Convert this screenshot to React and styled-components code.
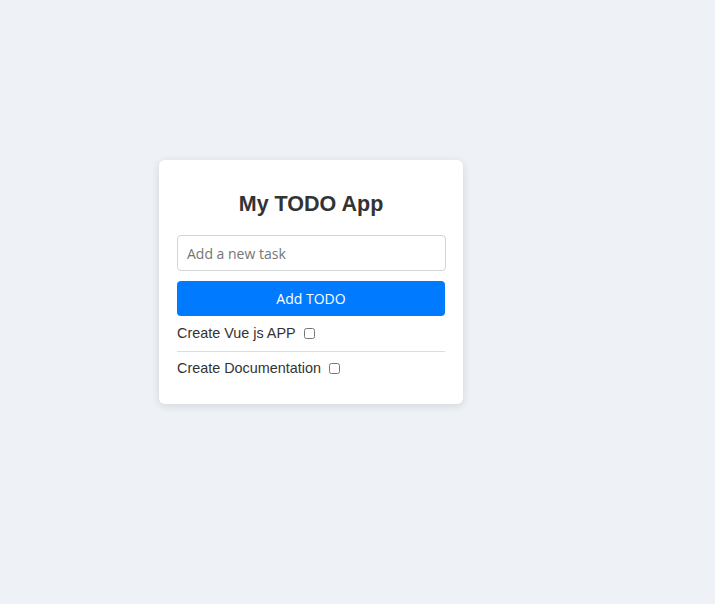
import React, { useState } from "react"
import styled, { createGlobalStyle } from "styled-components"

const Global = createGlobalStyle`
  html, body {
    margin: 0;
    padding: 0;
    background: #eef2f7;
    min-height: 100%;
  }
  body {
    font-family: "Liberation Sans", Arial, sans-serif;
    color: #333;
  }
`

const Page = styled.div`
  min-height: 604px;
  padding: 160px 0 0 159px;
  box-sizing: border-box;
`

const Card = styled.div`
  width: 304px;
  box-sizing: border-box;
  padding: 28px 18px 19px;
  background: #fff;
  border-radius: 6px;
  box-shadow: 0 2px 8px rgba(0, 0, 0, 0.12);
`

const Title = styled.h2`
  margin: 0 0 15px;
  text-align: center;
  font-size: 21.5px;
  line-height: 32px;
  font-weight: bold;
  color: #333;
`

const TaskInput = styled.input`
  display: block;
  width: 269px;
  height: 36px;
  box-sizing: border-box;
  padding: 0 9px;
  border: 1px solid #d4d4d4;
  border-radius: 4px;
  font-family: "Open Sans", "Noto Sans", sans-serif;
  font-size: 14px;
  color: #333;
  outline: none;
  &::placeholder {
    color: #757575;
  }
`

const AddButton = styled.button`
  display: block;
  width: 268px;
  height: 35px;
  margin-top: 10px;
  border: none;
  border-radius: 4px;
  background: #007bff;
  color: #fff;
  font-family: "Open Sans", "Noto Sans", sans-serif;
  font-size: 14px;
  cursor: pointer;
`

const List = styled.ul`
  list-style: none;
  margin: 0;
  padding: 0;
  width: 268px;
`

const Item = styled.li`
  display: flex;
  align-items: center;
  gap: 8px;
  font-size: 14.4px;
  line-height: 16px;
  padding: ${(p) => (p.$last ? "8px 0 9px" : "9px 0 10px")};
  border-bottom: ${(p) => (p.$last ? "none" : "1px solid #ddd")};
  input {
    margin: 0;
    width: 11px;
    height: 11px;
  }
`

export default function App() {
  const [todos] = useState(["Create Vue js APP", "Create Documentation"])
  return (
    <>
      <Global />
      <Page>
        <Card>
          <Title>My TODO App</Title>
          <TaskInput placeholder="Add a new task" />
          <AddButton>Add TODO</AddButton>
          <List>
            {todos.map((t, i) => (
              <Item key={t} $last={i === todos.length - 1}>
                {t}
                <input type="checkbox" />
              </Item>
            ))}
          </List>
        </Card>
      </Page>
    </>
  )
}
